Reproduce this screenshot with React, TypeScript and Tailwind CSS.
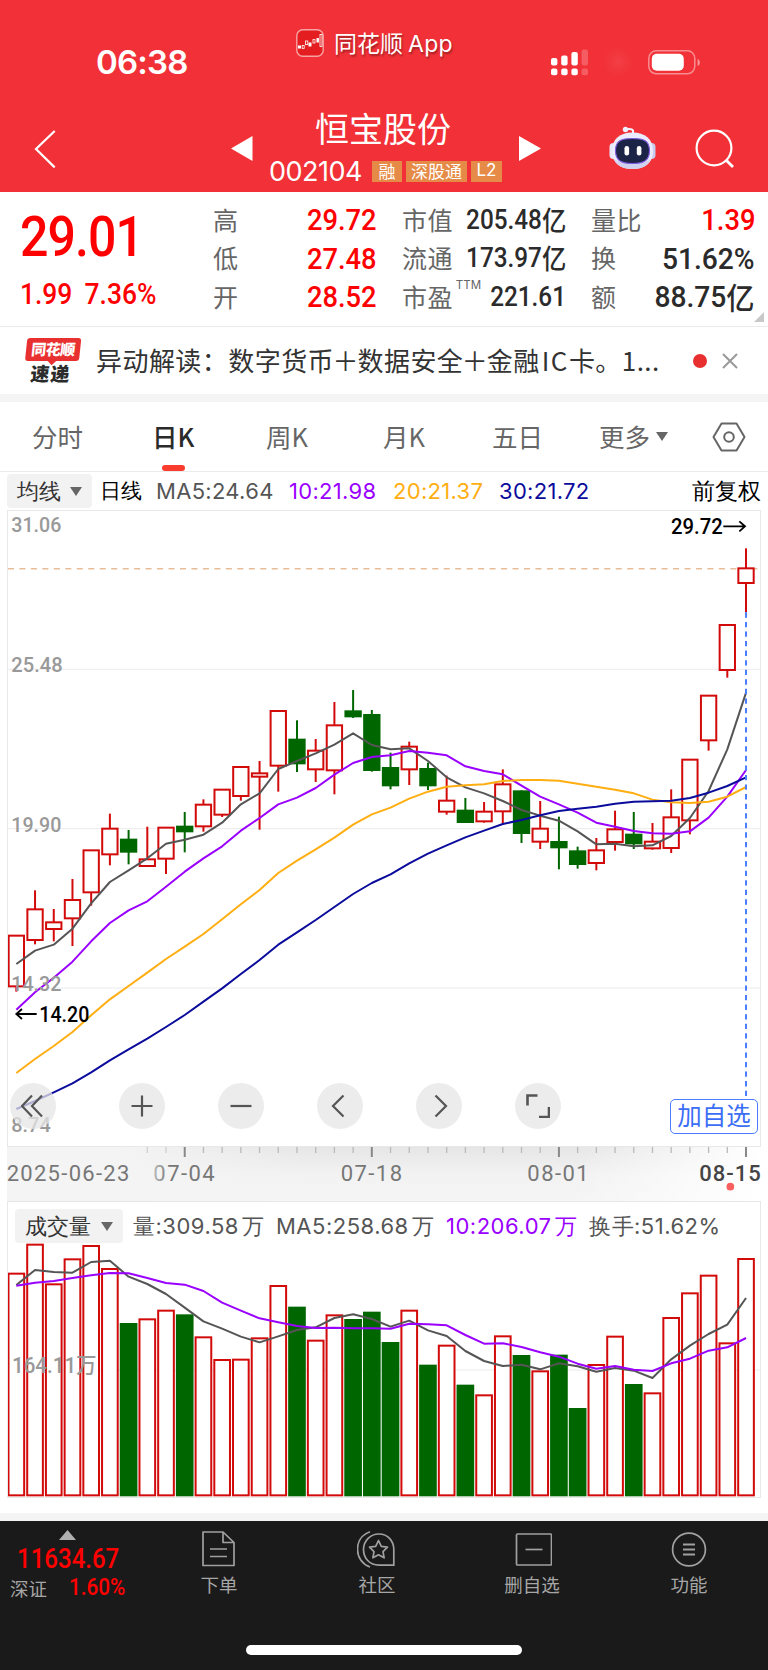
import type { ReactNode } from 'react'
import clsx from 'clsx'

type Candle = {
  high: number
  top: number
  bottom: number
  low: number
  up: boolean
}

// chart drawings use a 3x unit grid, one candle every STEP units
const STEP = 56.13
const FIRST = 49
const cx = (i: number) => FIRST + i * STEP

const up = (high: number, top: number, bottom: number, low: number): Candle => ({ high, top, bottom, low, up: true })
const down = (high: number, top: number, bottom: number, low: number): Candle => ({ high, top, bottom, low, up: false })

const candles: Candle[] = [
  up(737, 737, 889, 905),
  up(601, 658, 750, 763),
  up(657, 697, 717, 754),
  up(567, 630, 685, 768),
  up(481, 481, 607, 647),
  up(371, 416, 493, 526),
  down(420, 449, 485, 523),
  up(410, 508, 528, 528),
  up(413, 413, 506, 552),
  down(366, 410, 424, 487),
  up(328, 344, 409, 425),
  up(299, 299, 374, 381),
  up(231, 231, 318, 332),
  up(213, 250, 260, 419),
  up(63, 63, 227, 305),
  down(91, 149, 220, 246),
  up(147, 182, 238, 276),
  up(36, 106, 241, 313),
  down(0, 64, 79, 84),
  down(60, 75, 240, 245),
  down(188, 234, 286, 298),
  up(155, 170, 238, 285),
  down(218, 237, 286, 300),
  up(257, 332, 365, 374),
  down(324, 362, 396, 398),
  up(336, 365, 394, 398),
  up(238, 283, 364, 404),
  down(301, 304, 429, 459),
  up(333, 416, 455, 477),
  down(380, 456, 472, 538),
  down(470, 484, 522, 536),
  up(444, 481, 519, 541),
  up(362, 418, 456, 482),
  down(366, 434, 460, 477),
  up(399, 455, 475, 479),
  up(298, 382, 474, 489),
  up(209, 209, 391, 433),
  up(17, 17, 151, 182),
  up(-195, -195, -60, -37),
  up(-425, -365, -321, -233),
]

const priceLines = [
  {
    color: '#555555',
    points: [822, 782, 764, 716, 640, 576, 541, 505, 461, 449, 434, 398, 343, 310, 237, 213, 190, 164, 130, 165, 178, 175, 213, 262, 292, 310, 333, 360, 377, 392, 424, 463, 461, 469, 466, 438, 384, 303, 178, 8],
  },
  {
    color: '#9a00ff',
    points: [959, 907, 863, 815, 754, 699, 661, 634, 590, 545, 505, 469, 422, 384, 343, 323, 294, 254, 219, 201, 196, 183, 188, 196, 229, 243, 253, 287, 320, 343, 368, 398, 410, 423, 430, 431, 424, 383, 320, 240],
  },
  {
    color: '#ffae12',
    points: [1149, 1107, 1068, 1026, 976, 928, 888, 848, 807, 770, 732, 688, 643, 600, 549, 512, 478, 443, 404, 373, 353, 326, 305, 290, 286, 283, 273, 270, 270, 272, 281, 290, 299, 310, 329, 337, 339, 335, 320, 291],
  },
  {
    color: '#0b0b9c',
    points: [1257, 1233, 1207, 1180, 1147, 1111, 1078, 1046, 1011, 975, 935, 895, 852, 810, 764, 727, 690, 651, 612, 579, 553, 520, 491, 466, 442, 422, 402, 390, 376, 363, 356, 350, 341, 335, 334, 332, 324, 308, 288, 262],
  },
]

const volumes = [101, 14, 133, 58, 18, 87, 252, 238, 212, 226, 292, 360, 359, 295, 138, 203, 302, 226, 240, 218, 309, 212, 377, 317, 437, 466, 289, 348, 394, 347, 507, 375, 290, 435, 460, 234, 160, 107, 310, 57]

const volumeLines = [
  {
    color: '#555555',
    points: [135, 90, 96, 98, 66, 62, 110, 132, 162, 203, 244, 266, 290, 307, 289, 270, 262, 234, 223, 237, 260, 242, 271, 288, 333, 363, 378, 374, 388, 370, 379, 395, 384, 392, 414, 358, 317, 282, 254, 174],
  },
  {
    color: '#9a00ff',
    points: [137, 128, 123, 114, 106, 99, 100, 114, 129, 134, 153, 188, 212, 235, 247, 258, 264, 263, 265, 265, 266, 251, 253, 256, 285, 311, 310, 321, 337, 350, 371, 386, 378, 389, 393, 370, 356, 332, 322, 294],
  },
]

const toPoints = (values: number[]) => values.map((v, i) => `${cx(i).toFixed(1)},${v}`).join(' ')

function StatusBar() {
  return (
    <div className="flex h-[100px] items-start">
      <span className="ml-[96px] mt-[41px] w-[200px] font-[Inter] text-[33px] leading-[42px] font-semibold tracking-[-0.8px]">
        06:38
      </span>
      <svg className="mt-[29px] h-7 w-7" viewBox="0 0 28 28">
        <rect x="0.8" y="0.8" width="26.4" height="26.4" rx="6" fill="#e31d20" stroke="#f8a3a3" strokeWidth="1.4" />
        <g fill="#fff">
          <rect x="2" y="16.5" width="3" height="3" />
          <rect x="12.5" y="13.5" width="3" height="4" />
          <rect x="20.5" y="9" width="2.4" height="4.5" />
        </g>
        <g fill="none" stroke="#fff" strokeWidth="0.8">
          <rect x="6.2" y="16.4" width="2" height="3" />
          <rect x="9.4" y="12" width="2.4" height="3.6" />
          <rect x="17" y="10.6" width="2" height="3.4" />
          <rect x="24" y="5.5" width="2" height="12" />
        </g>
      </svg>
      <span className="ml-[10px] mt-[26px] w-[208px] text-[23px] leading-[32px] whitespace-nowrap [text-shadow:1px_2px_2px_rgba(0,0,0,0.35)]">
        同花顺<span className="ml-[5px] font-[Inter] tracking-[0.3px]">App</span>
      </span>
      <svg className="mt-[49px] ml-[9px] h-[27px] w-[38px]" viewBox="0 0 38 27" fill="#fff">
        <rect x="0" y="9" width="6.4" height="7.4" rx="2" />
        <rect x="10.2" y="6.6" width="6.4" height="9.8" rx="2" />
        <rect x="20.4" y="3" width="6.4" height="13.4" rx="2" />
        <rect x="30.6" y="0.4" width="6.4" height="16" rx="2" opacity="0.22" />
        <rect x="0" y="19.4" width="6.4" height="6.8" rx="2" />
        <rect x="10.2" y="19.4" width="6.4" height="6.8" rx="2" />
        <rect x="20.4" y="19.4" width="6.4" height="6.8" rx="2" />
        <rect x="30.6" y="19.4" width="6.4" height="6.8" rx="2" opacity="0.22" />
      </svg>
      <div className="mt-[46px] ml-[13px] h-8 w-8 rounded-full bg-[radial-gradient(circle,rgba(255,255,255,0.07),transparent_70%)]" />
      <svg className="mt-[50px] ml-[14px] h-[25px] w-[54px]" viewBox="0 0 54 25">
        <rect x="0.8" y="0.8" width="46" height="23" rx="7.5" fill="none" stroke="#fff" strokeOpacity="0.45" strokeWidth="1.5" />
        <rect x="3.8" y="3.8" width="32" height="17" rx="5" fill="#fff" />
        <path d="M49.6 9c3 1 3 6 0 7z" fill="#fff" opacity="0.5" />
      </svg>
    </div>
  )
}

function Robot() {
  return (
    <svg className="h-[44px] w-[47px]" viewBox="0 0 47 44">
      <path d="M24 9V4.500Q23 2.500 17.500 3.200" fill="none" stroke="#f4f4ff" strokeWidth="2" />
      <circle cx="16.500" cy="3.500" r="2.700" fill="#eef0ff" />
      <rect x="0.500" y="17" width="8" height="16" rx="4" fill="#e6e8fa" />
      <rect x="38.500" y="17" width="8" height="16" rx="4" fill="#c9ccec" />
      <path d="M23.500 6.500C36 6.500 44 13 44 25S36 43 23.500 43 3 37 3 25 11 6.500 23.500 6.500z" fill="#ebebfb" />
      <path d="M5 33c3 7 10 10 18.500 10S39 40 42 33c-6 6-31 6-37 0z" fill="#cfd1ee" />
      <path d="M23.500 12.500c11 0 17 2 17 12.300S34 37.500 23.500 37.500 6.500 35 6.500 24.800s6-12.300 17-12.300z" fill="#1b2447" stroke="#7f5ce0" strokeWidth="1.200" />
      <rect x="15.500" y="20" width="4.600" height="9.500" rx="2.300" fill="#fff" />
      <rect x="27.800" y="20" width="4.600" height="9.500" rx="2.300" fill="#fff" />
    </svg>
  )
}

function Tag({ children, className }: { children: ReactNode; className: string }) {
  return (
    <span className={clsx('flex h-[21px] items-center justify-center bg-[#e58b47] pb-px text-[17px] leading-none', className)}>
      {children}
    </span>
  )
}

function TitleBar() {
  return (
    <div className="flex h-[92px] items-start">
      <svg className="mt-[30px] ml-[34px] h-[39px] w-[22px]" viewBox="0 0 22 39" fill="none" stroke="#fff" strokeWidth="2.200">
        <path d="M20.700 1L2 19l18.700 18.400" />
      </svg>
      <svg className="mt-[36px] ml-[175px] h-[25px] w-[22px]" viewBox="0 0 22 25" fill="#fff">
        <path d="M0 12.500L21.500 0v25z" />
      </svg>
      <div className="ml-4 flex w-[234px] flex-col">
        <span className="mt-[8px] ml-[46px] text-[34px] leading-[40px] whitespace-nowrap">恒宝股份</span>
        <div className="mt-[8px] flex h-[30px] items-center">
          <span className="w-[103px] font-[Inter] text-[27px] leading-none tracking-[-0.5px]">002104</span>
          <Tag className="w-[30px]">融</Tag>
          <Tag className="ml-1 w-[61px]">深股通</Tag>
          <Tag className="ml-1 w-[31px] font-[Inter]">L2</Tag>
        </div>
      </div>
      <svg className="mt-[36px] ml-[16px] h-[25px] w-[22px]" viewBox="0 0 22 25" fill="#fff">
        <path d="M22 12.500L0 0v25z" />
      </svg>
      <div className="mt-[26px] ml-[68px]">
        <Robot />
      </div>
      <svg className="mt-[29px] ml-[39px] h-[40px] w-[40px]" viewBox="0 0 40 40" fill="none" stroke="#fff" strokeWidth="2.200">
        <circle cx="19" cy="19" r="17.400" />
        <path d="M31 31l7 7" strokeWidth="2.800" />
      </svg>
    </div>
  )
}

function Quote({ label, value, unit, small, red, sup }: {
  label: string
  value: string
  unit?: string
  small?: boolean
  red?: boolean
  sup?: string
}) {
  return (
    <div className="flex h-[38.500px] items-center whitespace-nowrap">
      <span className="shrink-0 pb-[2px] text-[25px] tracking-[0.4px] text-[#666]">{label}</span>
      {sup && <span className="mb-6 ml-[3px] w-[26px] shrink-0 font-[Inter] text-[11.500px] text-[#666]">{sup}</span>}
      <span
        className={clsx(
          'ml-auto flex origin-right items-center font-[Roboto] leading-none font-medium',
          sup ? '-ml-2 w-[84px] justify-end' : '',
          small ? 'scale-x-[0.9] text-[27px]' : red ? 'scale-x-[0.91] text-[30px]' : 'scale-x-[0.94] text-[30px]',
          red ? 'text-[#ff0000]' : 'text-[#2b2b2b]'
        )}
      >
        {value}
        {unit && (
          <span className={clsx("pb-[2px] font-['Noto_Sans_CJK_SC'] font-medium", small ? 'text-[27px]' : 'text-[30px]')}>{unit}</span>
        )}
      </span>
    </div>
  )
}

function QuotePanel() {
  return (
    <div className="relative flex h-[135px] border-b border-[#ebebeb]">
      <div className="w-[213px] pl-5 font-[Roboto] font-medium whitespace-nowrap text-[#ff0000]">
        <div className="mt-[14px] origin-left scale-x-[0.91] text-[55px] leading-[62px] tracking-[-1px]">29.01</div>
        <div className="mt-[6px] flex origin-left scale-x-[0.91] text-[29px] leading-[40px]">
          <span className="w-[71px]">1.99</span>
          <span>7.36%</span>
        </div>
      </div>
      <div className="w-[164px] pt-[9px]">
        <Quote label="高" value="29.72" red />
        <Quote label="低" value="27.48" red />
        <Quote label="开" value="28.52" red />
      </div>
      <div className="ml-[25px] w-[164px] pt-[9px]">
        <Quote label="市值" value="205.48" unit="亿" small />
        <Quote label="流通" value="173.97" unit="亿" small />
        <Quote label="市盈" value="221.61" sup="TTM" small />
      </div>
      <div className="ml-[25px] w-[164px] pt-[9px]">
        <Quote label="量比" value="1.39" red />
        <Quote label="换" value="51.62%" />
        <Quote label="额" value="88.75" unit="亿" />
      </div>
      <svg className="absolute right-1 bottom-1 h-[10px] w-[10px]" viewBox="0 0 10 10" fill="#c8c8c8">
        <path d="M10 0v10H0z" />
      </svg>
    </div>
  )
}

function NewsBar() {
  return (
    <div className="flex h-[67px] items-center">
      <div className="ml-[25px] w-[54px] -skew-x-6 text-center font-black">
        <div className="relative h-[23px] rounded-[3px] bg-[#e93030] text-[15px] leading-[22px] tracking-[-0.5px] text-white">
          同花顺
          <span className="absolute top-[20px] left-[24px] h-[6px] w-[6px] rotate-45 bg-[#e93030]" />
        </div>
        <div className="mt-[2px] text-[19px] leading-[20px] tracking-[1px] text-[#2b2b2b]">速递</div>
      </div>
      <span className="ml-[17px] w-[590px] pb-[2px] text-[26px] tracking-[0.45px] whitespace-nowrap text-[#333]">
        异动解读：数字货币<span className="-mx-[1.500px]">＋</span>数据安全<span className="-mx-[1.500px]">＋</span>金融
        <span className="ml-[2px] tracking-[1.500px]">IC</span>卡。1...
      </span>
      <span className="ml-[7px] h-[14px] w-[14px] rounded-full bg-[#e93030]" />
      <svg className="ml-[15px] h-4 w-4" viewBox="0 0 16 16" stroke="#999" strokeWidth="2">
        <path d="M1 1l14 14M15 1L1 15" />
      </svg>
    </div>
  )
}

function PeriodTabs() {
  return (
    <div className="flex h-[70px] items-center border-b border-[#ebebeb] text-[25.500px] whitespace-nowrap text-[#666]">
      <span className="ml-8 w-[120px]">分时</span>
      <span className="relative w-[114px] font-medium text-[#2b2b2b]">
        日K
        <span className="absolute -bottom-[15px] left-[10px] h-[6px] w-[23px] rounded-full bg-[#fa3c2f]" />
      </span>
      <span className="w-[117px]">周K</span>
      <span className="w-[109px]">月K</span>
      <span className="w-[107px]">五日</span>
      <span className="w-[57px]">更多</span>
      <svg className="h-[9px] w-[12px]" viewBox="0 0 12 9" fill="#666">
        <path d="M0 0h12L6 9z" />
      </svg>
      <svg className="ml-[44px] h-[30px] w-[34px]" viewBox="0 0 34 30" fill="none" stroke="#666" strokeWidth="2">
        <path d="M9.500 1.500h15L32.500 15l-8 13.500h-15L1.500 15z" strokeLinejoin="round" />
        <circle cx="17" cy="15" r="4.800" />
      </svg>
    </div>
  )
}

function Picker({ label, className }: { label: string; className: string }) {
  return (
    <span className={clsx('flex h-[34px] shrink-0 items-center justify-between rounded bg-[#f2f2f2] px-[10px] text-[21.500px] tracking-normal text-[#333]', className)}>
      {label}
      <svg className="h-[9px] w-[12px]" viewBox="0 0 12 9" fill="#666">
        <path d="M0 0h12L6 9z" />
      </svg>
    </span>
  )
}

function AverageRow() {
  return (
    <div className="flex h-[38px] items-center pl-[7px] font-[Inter] text-[22px] tracking-[0.300px] whitespace-nowrap">
      <Picker label="均线" className="w-[85px]" />
      <span className="ml-[8px] w-[56px] text-[21px] text-black">日线</span>
      <span className="w-[133px] text-[#555]">MA5:24.64</span>
      <span className="w-[104px] text-[#9a00ff]">10:21.98</span>
      <span className="w-[106px] text-[#ffae12]">20:21.37</span>
      <span className="w-[193px] text-[#0b0b9c]">30:21.72</span>
      <span className="text-[22.500px] tracking-normal text-black">前复权</span>
    </div>
  )
}

function Lines({ lines }: { lines: { color: string; points: number[] }[] }) {
  return (
    <g fill="none" strokeWidth="6" strokeLinejoin="round">
      {lines.map((line, i) => (
        <polyline key={i} points={toPoints(line.points)} stroke={line.color} />
      ))}
    </g>
  )
}

const gridLines = [-62, 416, 894]

const priceLabels = [
  { text: '31.06', y: -475, width: 150 },
  { text: '25.48', y: -54, width: 154 },
  { text: '19.90', y: 425, width: 150 },
  { text: '14.32', y: 903, width: 150 },
  { text: '8.74', y: 1325, width: 118 },
]

function PriceChart() {
  return (
    <svg className="h-[635px] w-[752px]" viewBox="24 -537 2256 1905" fontFamily="Roboto">
      {gridLines.map((y) => (
        <line key={y} x1="24" x2="2280" y1={y} y2={y} stroke="#ebebeb" strokeWidth="3" />
      ))}
      <line x1="24" x2="2272" y1="-364" y2="-364" stroke="#e6bd98" strokeWidth="4.500" strokeDasharray="18 16.400" />
      {candles.map((c, i) => {
        const color = c.up ? '#d20a0a' : '#006600'
        return (
          <g key={i} stroke={color} strokeWidth="6">
            <line x1={cx(i)} x2={cx(i)} y1={c.high} y2={c.top} />
            <line x1={cx(i)} x2={cx(i)} y1={c.bottom} y2={c.low} />
            <rect x={cx(i) - 23} y={c.top} width="46" height={c.bottom - c.top} fill={c.up ? '#fff' : color} />
          </g>
        )
      })}
      <Lines lines={priceLines} />
      <line x1={cx(39)} x2={cx(39)} y1="-233" y2="1222" stroke="#4a7dff" strokeWidth="6" strokeDasharray="16 12.700" />
      <g fontSize="63" fill="#999" fontWeight="500">
        {priceLabels.map((l) => (
          <text key={l.text} x="34" y={l.y} textLength={l.width} lengthAdjust="spacingAndGlyphs">{l.text}</text>
        ))}
      </g>
      <g fontSize="65" fill="#000" fontWeight="500">
        <text x="118" y="995" textLength="150" lengthAdjust="spacingAndGlyphs">14.20</text>
        <text x="2013" y="-469" textLength="155" lengthAdjust="spacingAndGlyphs">29.72</text>
      </g>
      <g fill="none" stroke="#000" strokeWidth="5.500">
        <path d="M110 972H50M66 957L49 972L66 987" />
        <path d="M2170 -491H2234M2218 -506L2235 -491L2218 -476" />
      </g>
    </svg>
  )
}

function RoundButton({ children, className }: { children: ReactNode; className?: string }) {
  return (
    <button className={clsx('flex h-[46px] w-[46px] items-center justify-center rounded-full bg-[#e6e6e6]/75', className)}>
      <svg className="h-6 w-6" viewBox="0 0 24 24" fill="none" stroke="#555" strokeWidth="2.200">
        {children}
      </svg>
    </button>
  )
}

function ChartTools() {
  return (
    <div className="absolute bottom-[12px] left-[2px] flex w-[751px] items-start">
      <RoundButton>
        <path d="M11 1.500L1 12l10 10.500M21 1.500L11 12l10 10.500" />
      </RoundButton>
      <RoundButton className="ml-[63px]">
        <path d="M1.500 12h21M12 1.500v21" />
      </RoundButton>
      <RoundButton className="ml-[53px]">
        <path d="M1.500 12h21" />
      </RoundButton>
      <RoundButton className="ml-[53px]">
        <path d="M15.500 1.500L5 12l10.500 10.500" />
      </RoundButton>
      <RoundButton className="ml-[53px]">
        <path d="M8.500 1.500L19 12 8.500 22.500" />
      </RoundButton>
      <RoundButton className="ml-[53px]">
        <path d="M1.500 11.500V1.500h10M23 13v10H13" strokeWidth="2.600" />
      </RoundButton>
      <button className="mt-[16px] mr-[3px] ml-auto h-[35px] w-[88px] rounded-[5px] border border-[#4a7dff] bg-white pb-[2px] text-[24.500px] leading-none whitespace-nowrap text-[#3b6ef5]">
        加自选
      </button>
    </div>
  )
}

const dateLabels = [
  { text: '07-04', x: 460, width: 184 },
  { text: '07-18', x: 1022, width: 184 },
  { text: '08-01', x: 1582, width: 184 },
]

function DateAxis() {
  return (
    <svg className="ml-[7px] h-[54px] w-[754px]" viewBox="21 0 2262 162" fontFamily="Roboto">
      <defs>
        <linearGradient id="shade" x1="0" x2="0" y1="0" y2="1">
          <stop offset="0" stopColor="#e6e6e6" />
          <stop offset="0.500" stopColor="#f2f2f2" />
          <stop offset="1" stopColor="#f5f5f5" />
        </linearGradient>
        <linearGradient id="fade">
          <stop offset="0.150" stopColor="#f4f4f4" />
          <stop offset="0.400" stopColor="#f4f4f4" stopOpacity="0" />
          <stop offset="0.750" stopColor="#fff" stopOpacity="0" />
          <stop offset="1" stopColor="#fff" />
        </linearGradient>
        <linearGradient id="dateFade">
          <stop offset="0" stopColor="#bbb" />
          <stop offset="0.250" stopColor="#777" />
        </linearGradient>
      </defs>
      <rect x="21" width="2262" height="162" fill="url(#shade)" />
      <rect x="21" width="2262" height="162" fill="url(#fade)" />
      {candles.map((_, i) => {
        if (i < 7) return null
        const major = i % 10 === 9
        return (
          <line
            key={i}
            x1={cx(i)}
            x2={cx(i)}
            y1="0"
            y2={major ? 30 : 18}
            stroke={major ? '#888' : '#bbb'}
            strokeWidth={major ? 6 : 4}
            opacity={i < 9 ? 0.6 : 1}
          />
        )
      })}
      <g fontSize="66" fill="#777">
        <text x="20" y="102" textLength="368" lengthAdjust="spacing">2025-06-23</text>
        {dateLabels.map((d, i) => (
          <text key={d.text} x={d.x} y="102" textLength={d.width} fill={i === 0 ? 'url(#dateFade)' : '#777'}>{d.text}</text>
        ))}
        <text x="2098" y="102" textLength="184" fill="#444" fontWeight="500">08-15</text>
      </g>
      <circle cx="2191" cy="119" r="11.500" fill="#f95f5f" />
    </svg>
  )
}

function VolumePanel() {
  return (
    <div className="ml-[7px] h-[297px] w-[754px] border border-[#e8e8e8]">
      <div className="flex h-[41px] items-end pl-[7px] font-[Inter] text-[22px] leading-[33px] tracking-[0.500px] whitespace-nowrap text-[#555]">
        <Picker label="成交量" className="w-[108px]" />
        <span className="ml-[10px] w-[143px]">量:309.58<span className="ml-[3px]">万</span></span>
        <span className="w-[170px]">MA5:258.68<span className="ml-[3px]">万</span></span>
        <span className="w-[143px] text-[#9a00ff]">10:206.07<span className="ml-[3px]">万</span></span>
        <span>换手:51.62%</span>
      </div>
      <svg className="h-[254px] w-[752px]" viewBox="24 9 2256 762" fontFamily="Roboto">
        <line x1="24" x2="2280" y1="390" y2="390" stroke="#ebebeb" strokeWidth="3" />
        {volumes.map((v, i) => {
          const color = candles[i].up ? '#d20a0a' : '#006600'
          return (
            <rect
              key={i}
              x={cx(i) - 23.500}
              y={v}
              width="47"
              height={766 - v}
              fill={candles[i].up ? '#fff' : color}
              stroke={color}
              strokeWidth="6"
            />
          )
        })}
        <Lines lines={volumeLines} />
        <text x="36" y="400" fontSize="65" fill="#999" fontWeight="500" fontFamily="Roboto, Noto Sans CJK SC" textLength="254" lengthAdjust="spacingAndGlyphs">
          164.11万
        </text>
      </svg>
    </div>
  )
}

function NavItem({ label, children, className }: { label: string; children: ReactNode; className: string }) {
  return (
    <div className={clsx('flex flex-col items-center', className)}>
      <svg className="h-[38px] w-[40px]" viewBox="0 0 40 38" fill="none" stroke="#a0a0a0" strokeWidth="1.700">
        {children}
      </svg>
      <span className="mt-px text-[18.500px] leading-[28px] whitespace-nowrap text-[#a6a6a6]">{label}</span>
    </div>
  )
}

function BottomBar() {
  return (
    <div className="flex h-[149px] flex-col bg-[#1a1a1a]">
      <div className="flex">
        <div className="flex w-[179px] flex-col pl-[10px]">
          <svg className="mt-[9px] ml-[49px] h-[10px] w-[17px]" viewBox="0 0 17 10" fill="#b0b0b0">
            <path d="M0 10L8.500 0 17 10z" />
          </svg>
          <span className="mt-[6px] ml-[7px] origin-left scale-x-[0.89] font-[Roboto] text-[27px] leading-[27px] font-medium text-[#ff0000]">
            11634.67
          </span>
          <div className="flex h-[31px] items-center text-[18.500px] text-[#a6a6a6]">
            <span className="w-[59px] whitespace-nowrap">深证</span>
            <span className="origin-left scale-x-[0.9] font-[Roboto] text-[23px] font-medium text-[#ff0000]">1.60%</span>
          </div>
        </div>
        <div className="flex pt-[10px]">
          <NavItem label="下单" className="w-[80px]">
            <path d="M6 1h20l11 10.500V34.500H6zM26 1v10.500H37" strokeLinejoin="round" transform="translate(-2)" />
            <path d="M11 18h17M11 25.500h17" />
          </NavItem>
          <NavItem label="社区" className="ml-[78px] w-[80px]">
            <g transform="translate(-1)">
              <path d="M14 .8C5 4 1.500 11 1.500 18.500S6 33 14 36" />
              <path d="M37.800 34.200H23C13.500 34.200 7.500 27 7.500 18.500S14 3 23 3s14.800 7 14.800 15.500z" />
              <path d="M22.500 9.500l2.800 5.800 6.200.9-4.500 4.400 1.100 6.200-5.600-3-5.600 3 1.100-6.200-4.500-4.400 6.200-.9z" strokeLinejoin="round" />
            </g>
          </NavItem>
          <NavItem label="删自选" className="ml-[75px] w-[80px]">
            <rect x="4.500" y="3" width="35" height="31" rx="1" />
            <path d="M13.500 18.500h17" />
          </NavItem>
          <NavItem label="功能" className="ml-[77px] w-[80px]">
            <circle cx="20" cy="18.500" r="16.400" />
            <path d="M14 13.500h12M14 18.500h12M14 23.500h12" strokeWidth="2" />
          </NavItem>
        </div>
      </div>
      <div className="mt-auto mb-[15px] ml-[246px] h-[10px] w-[276px] rounded-full bg-white" />
    </div>
  )
}

export default function App() {
  return (
    <div className="w-[768px] bg-white font-['Noto_Sans_CJK_SC',sans-serif] leading-normal">
      <header className="h-[192px] bg-[#f23037] text-white">
        <StatusBar />
        <TitleBar />
      </header>
      <QuotePanel />
      <NewsBar />
      <div className="h-2 bg-[#f4f4f4]" />
      <PeriodTabs />
      <AverageRow />
      <div className="relative ml-[7px] h-[637px] w-[754px] border border-[#e8e8e8]">
        <PriceChart />
        <ChartTools />
      </div>
      <DateAxis />
      <VolumePanel />
      <div className="mt-[15px] h-2 bg-[#f4f4f4]" />
      <BottomBar />
    </div>
  )
}
